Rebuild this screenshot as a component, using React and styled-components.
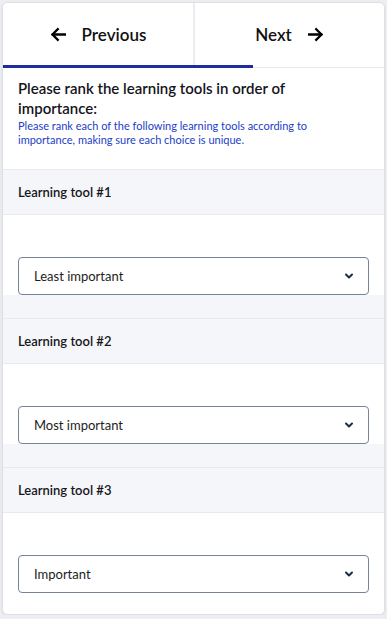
import { createGlobalStyle } from 'styled-components';
import styled from 'styled-components';

const GlobalStyle = createGlobalStyle`
  html, body {
    margin: 0;
    padding: 0;
    background: #eceef1;
  }
  body {
    padding: 2px 2px 0 2px;
    font-family: Lato, "Liberation Sans", sans-serif;
    color: #1b1b1f;
  }
`;

const Card = styled.div`
  width: 381px;
  background: #fff;
  border: 1px solid #dde0e5;
  border-radius: 6px;
  overflow: hidden;
  box-shadow: 0 1px 3px rgba(0, 0, 0, 0.08);
`;

const Tabs = styled.div`
  display: grid;
  grid-template-columns: 190px 1fr;
  height: 62px;
`;

const Tab = styled.button`
  display: flex;
  align-items: center;
  justify-content: center;
  gap: 15px;
  border: none;
  border-left: ${p => (p.$divider ? '2px solid #e9ecf1' : 'none')};
  background: #fff;
  font-family: Lato, "Liberation Sans", sans-serif;
  font-size: 17px;
  font-weight: 600;
  color: #111;
  padding: 0;
  cursor: pointer;
  svg {
    width: 17px;
    height: 17px;
  }
`;

const Track = styled.div`
  height: 3px;
  background: #fff;
  border-bottom: 1px solid #e6e8ec;
  box-sizing: border-box;
`;

const Bar = styled.div`
  height: 3px;
  background: #1f2b9e;
`;

const Intro = styled.div`
  padding: 11px 34px 23px 15px;
`;

const Title = styled.h1`
  margin: 0;
  font-size: 15px;
  line-height: 19.5px;
  font-weight: 600;
  color: #14141a;
`;

const Subtitle = styled.p`
  margin: 1px 0 0;
  font-size: 11px;
  line-height: 13.5px;
  color: #2340c6;
`;

const Section = styled.div`
  background: #f5f6f9;
  padding-bottom: ${p => (p.$last ? '0' : '23px')};
`;

const SectionHeader = styled.div`
  height: 46px;
  display: flex;
  align-items: center;
  padding: 0 15px;
  box-sizing: border-box;
  border-top: 1px solid #e8eaef;
  border-bottom: 1px solid #e8eaef;
  background: #f5f6f9;
  font-size: 13px;
  font-weight: 600;
  color: #16161c;
`;

const Body = styled.div`
  background: #fff;
  padding: 42px 15px ${p => (p.$last ? '21px' : '0')};
`;

const Select = styled.div`
  height: 38px;
  box-sizing: border-box;
  border: 1px solid #76839a;
  border-radius: 4px;
  background: #fff;
  display: flex;
  align-items: center;
  justify-content: space-between;
  padding: 0 14px 0 15px;
  font-size: 13px;
  color: #1d1d22;
  cursor: pointer;
  svg {
    width: 10px;
    height: 10px;
  }
`;

const ArrowLeft = () => (
  <svg viewBox="0 0 24 24" fill="none" stroke="#000" strokeWidth="3.2" strokeLinecap="square">
    <path d="M21 12H4" />
    <path d="M11 4.5L3.5 12 11 19.5" />
  </svg>
);

const ArrowRight = () => (
  <svg viewBox="0 0 24 24" fill="none" stroke="#000" strokeWidth="3.2" strokeLinecap="square">
    <path d="M3 12h17" />
    <path d="M13 4.5l7.5 7.5-7.5 7.5" />
  </svg>
);

const Chevron = () => (
  <svg viewBox="0 0 10 10" fill="none" stroke="#1f2a44" strokeWidth="2" strokeLinecap="round" strokeLinejoin="round">
    <path d="M2 3.5l3 3 3-3" />
  </svg>
);

const tools = [
  { id: 1, value: 'Least important' },
  { id: 2, value: 'Most important' },
  { id: 3, value: 'Important' },
];

function App() {
  return (
    <>
      <GlobalStyle />
      <Card>
        <Tabs>
          <Tab>
            <ArrowLeft />
            Previous
          </Tab>
          <Tab $divider>
            Next
            <ArrowRight />
          </Tab>
        </Tabs>
        <Track>
          <Bar style={{ width: `${(2 / 3) * 100 - 1}%` }} />
        </Track>
        <Intro>
          <Title>Please rank the learning tools in order of importance:</Title>
          <Subtitle>
            Please rank each of the following learning tools according to importance, making sure each choice is unique.
          </Subtitle>
        </Intro>
        {tools.map((tool, i) => {
          const last = i === tools.length - 1;
          return (
            <Section key={`tool-${tool.id}`} $last={last}>
              <SectionHeader>Learning tool #{tool.id}</SectionHeader>
              <Body $last={last}>
                <Select>
                  {tool.value}
                  <Chevron />
                </Select>
              </Body>
            </Section>
          );
        })}
      </Card>
    </>
  );
}

export default App;
